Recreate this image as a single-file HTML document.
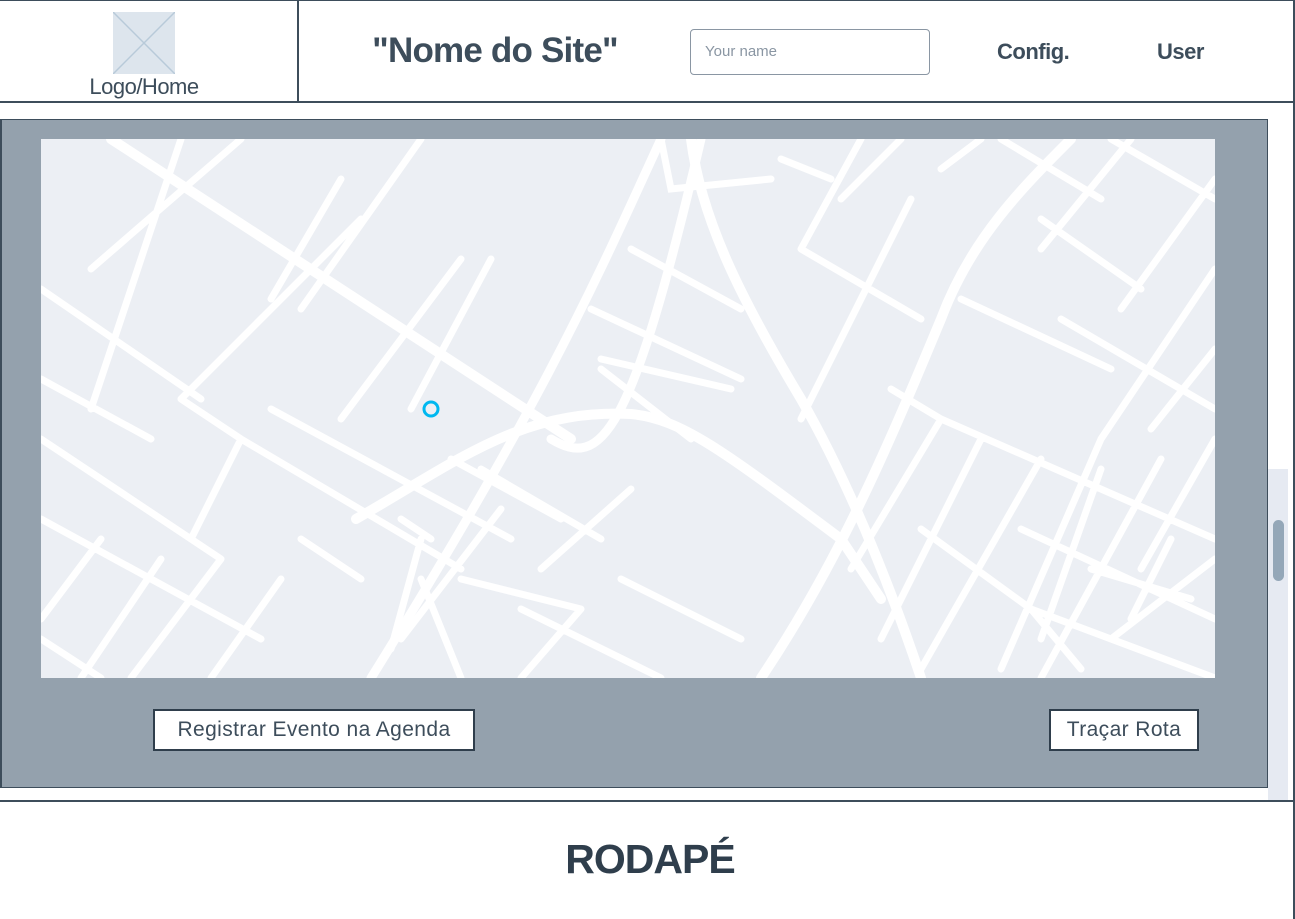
<!DOCTYPE html>
<html><head><meta charset="utf-8"><style>
body{margin:0;width:1295px;height:919px;position:relative;background:#fff;font-family:"Liberation Sans",sans-serif;overflow:hidden;color:#2f3e4c}
.a{position:absolute}
</style></head><body>
<div class="a" style="left:0;top:0;width:1295px;height:1px;background:#3d4d5b"></div>
<div class="a" style="left:1293px;top:0;width:2px;height:919px;background:#3d4d5b"></div>
<div class="a" style="left:0;top:101px;width:1295px;height:2px;background:#3d4d5b"></div>
<div class="a" style="left:297px;top:0;width:2px;height:102px;background:#3d4d5b"></div>
<svg class="a" style="left:113px;top:12px" width="62" height="62"><rect width="62" height="62" fill="#dde5ed"/><path d="M0 0L62 62M62 0L0 62" stroke="#b8cad9" stroke-width="1.5"/></svg>
<div class="a" style="left:60px;top:74px;width:168px;text-align:center;font-size:22px;color:#3d4d5b;letter-spacing:-0.5px">Logo/Home</div>
<div class="a" style="left:340px;top:31px;width:310px;text-align:center;font-size:35px;font-weight:bold;color:#3d4d5b;letter-spacing:-0.8px">"Nome do Site"</div>
<div class="a" style="left:690px;top:29px;width:240px;height:46px;border:1px solid #8a96a3;border-radius:4px;box-sizing:border-box;font-size:15px;color:#8a96a3;padding:13px 14px">Your name</div>
<div class="a" style="left:997px;top:39px;font-size:22px;font-weight:bold;color:#3d4d5b;letter-spacing:-0.5px">Config.</div>
<div class="a" style="left:1157px;top:39px;font-size:22px;font-weight:bold;color:#3d4d5b;letter-spacing:-0.5px">User</div>
<div class="a" style="left:1268px;top:469px;width:20px;height:332px;background:#e6eaf2"></div>
<div class="a" style="left:1273px;top:520px;width:11px;height:61px;background:#94a7b8;border-radius:6px"></div>
<div class="a" style="left:0;top:119px;width:1268px;height:669px;background:#94a1ad;border:1px solid #3d4d5b;border-left:2px solid #3d4d5b;box-sizing:border-box"></div>
<svg class="a" style="left:41px;top:139px" width="1174" height="539"><rect width="1174" height="539" fill="#eceff4"/>
<g stroke="#fff" stroke-width="7" fill="none" stroke-linecap="round">
<path d="M70 0L530 300" stroke-width="10"/><path d="M620 0C560 130 510 250 330 539" stroke-width="9"/>
<path d="M315 380C420 320 480 270 590 275C640 280 680 310 800 400L840 460" stroke-width="10"/>
<path d="M650 0C660 80 700 160 760 260C800 330 840 420 880 539" stroke-width="10"/>
<path d="M1030 0C980 50 930 100 900 180C850 300 800 420 720 539" stroke-width="10"/>
<path d="M510 300C560 330 590 300 660 0" stroke-width="9"/>
<path d="M0 150L160 260M0 240L110 300M0 380L220 500M0 500L60 539M50 270L140 0M200 0L50 130M300 40L230 160M380 0L260 170M420 120L300 280M320 80L140 260M140 260L200 300L150 400M230 270L470 400M370 270L450 120M410 320L520 380M200 300L420 430M0 300L180 420M60 400L0 480M120 420L40 539M180 420L90 539M240 440L170 539M260 400L320 440M440 330L560 400M360 380L390 400M380 400L350 510M460 370L360 500M420 440L540 470M540 470L480 539M380 440L420 539M500 430L590 350M620 0L630 50L730 40M550 170L700 240M560 220L690 250M740 20L790 40M590 110L700 170M760 110L880 180M820 0L760 110M860 0L800 60M870 60L760 280M920 160L1070 230M960 0L1060 60M1070 0L1174 60M1090 0L1000 110M1174 40L1080 170M1174 130L1060 300M850 250L900 280L1174 400M900 280L810 430M940 300L840 500M1000 320L880 530M1060 300L960 530M1120 320L1000 539M980 390L1174 480M1060 330L1000 500M1050 430L1150 460M880 390L990 470L1174 539M990 470L1040 530M1130 400L1090 480M1174 300L1100 430M1070 500L1174 420M1110 290L1174 210M1000 80L1100 150M1020 180L1174 270M940 0L900 30M560 230L650 300M480 470L620 539M580 440L700 500"/>
</g>
<circle cx="390" cy="270" r="7" fill="none" stroke="#00b8f0" stroke-width="3"/></svg>
<div class="a" style="left:153px;top:709px;width:322px;height:42px;border:2px solid #2f3e4c;background:#fff;box-sizing:border-box;font-size:21px;color:#3d4d5b;text-align:center;line-height:38px;letter-spacing:0.4px">Registrar Evento na Agenda</div>
<div class="a" style="left:1049px;top:709px;width:150px;height:42px;border:2px solid #2f3e4c;background:#fff;box-sizing:border-box;font-size:21px;color:#3d4d5b;text-align:center;line-height:38px;letter-spacing:0.4px">Traçar Rota</div>
<div class="a" style="left:0;top:800px;width:1295px;height:2px;background:#3d4d5b"></div>
<div class="a" style="left:0;top:836px;width:1300px;text-align:center;font-size:41px;font-weight:bold;color:#2f3e4c;letter-spacing:-1px">RODAPÉ</div>
</body></html>
